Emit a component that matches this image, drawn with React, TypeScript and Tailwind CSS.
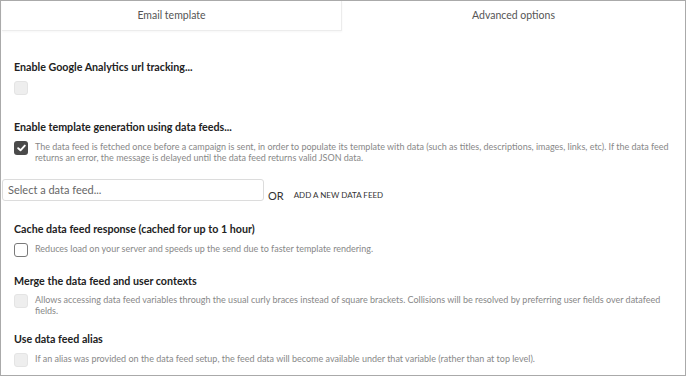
import React from 'react';

function Box({ state }: { state: 'checked' | 'empty' | 'disabled' }) {
  if (state === 'checked') {
    return (
      <div className="w-[14px] h-[14px] shrink-0 rounded-[3px] bg-[#4a4a4a] flex items-center justify-center">
        <svg width="9" height="8" viewBox="0 0 9 8">
          <path d="M1.2 4.2 L3.5 6.3 L7.8 1.6" fill="none" stroke="#fff" strokeWidth="1.9" strokeLinecap="round" strokeLinejoin="round" />
        </svg>
      </div>
    );
  }
  if (state === 'empty') {
    return <div className="w-[14px] h-[14px] shrink-0 rounded-[3px] border-[1.5px] border-[#7a7a7a] bg-white" />;
  }
  return <div className="w-[14px] h-[14px] shrink-0 rounded-[3px] border border-[#e4e4e4] bg-[#eeeeee]" />;
}

function Heading({ children, className }: { children: React.ReactNode; className?: string }) {
  return <div className={'text-[10.7px] leading-[12px] font-bold text-[#222] ' + (className ?? '')}>{children}</div>;
}

function Option({ state, text, className }: { state: 'checked' | 'empty' | 'disabled'; text?: string; className?: string }) {
  return (
    <div className={'flex gap-[7px] ' + (className ?? '')}>
      <Box state={state} />
      {text && <p className="mt-px text-[9px] leading-[10.5px] text-[#888]">{text}</p>}
    </div>
  );
}

export default function App() {
  return (
    <div className="w-[686px] h-[376px] border border-[#aaaaaa] bg-white overflow-hidden" style={{ fontFamily: 'Lato, "Liberation Sans", sans-serif' }}>
      {/* Tabs */}
      <div className="flex h-[30px]">
        <div className="w-[340px] ml-px flex items-center justify-center border-r border-b border-[#ececec] shadow-[0_1px_2px_rgba(0,0,0,0.04)] text-[10.5px] text-[#555]">
          Email template
        </div>
        <div className="flex-1 flex items-center justify-center text-[10.5px] text-[#555]">Advanced options</div>
      </div>

      <div className="pl-[13px] pr-[6px]">
        <Heading className="mt-[30px]">Enable Google Analytics url tracking...</Heading>
        <Option state="disabled" className="mt-[8px]" />

        <Heading className="mt-[26px]">Enable template generation using data feeds...</Heading>
        <Option
          state="checked"
          className="mt-[8px]"
          text="The data feed is fetched once before a campaign is sent, in order to populate its template with data (such as titles, descriptions, images, links, etc). If the data feed returns an error, the message is delayed until the data feed returns valid JSON data."
        />
      </div>

      <div className="flex items-end mt-[16px] pl-px">
        <div className="w-[262px] h-[22px] border border-[#dcdcdc] rounded-[3px] flex items-center px-[5px] text-[11px] text-[#666]">
          Select a data feed...
        </div>
        <span className="ml-[4px] text-[11px] leading-[11px] text-[#333]">OR</span>
        <span className="ml-[10px] mb-px text-[8px] leading-[9px] text-[#333]">ADD A NEW DATA FEED</span>
      </div>

      <div className="pl-[13px] pr-[6px]">
        <Heading className="mt-[22px]">Cache data feed response (cached for up to 1 hour)</Heading>
        <Option
          state="empty"
          className="mt-[8px]"
          text="Reduces load on your server and speeds up the send due to faster template rendering."
        />

        <Heading className="mt-[18px]">Merge the data feed and user contexts</Heading>
        <Option
          state="disabled"
          className="mt-[7px]"
          text="Allows accessing data feed variables through the usual curly braces instead of square brackets. Collisions will be resolved by preferring user fields over datafeed fields."
        />

        <Heading className="mt-[17px]">Use data feed alias</Heading>
        <Option
          state="disabled"
          className="mt-[8px]"
          text="If an alias was provided on the data feed setup, the feed data will become available under that variable (rather than at top level)."
        />
      </div>
    </div>
  );
}
